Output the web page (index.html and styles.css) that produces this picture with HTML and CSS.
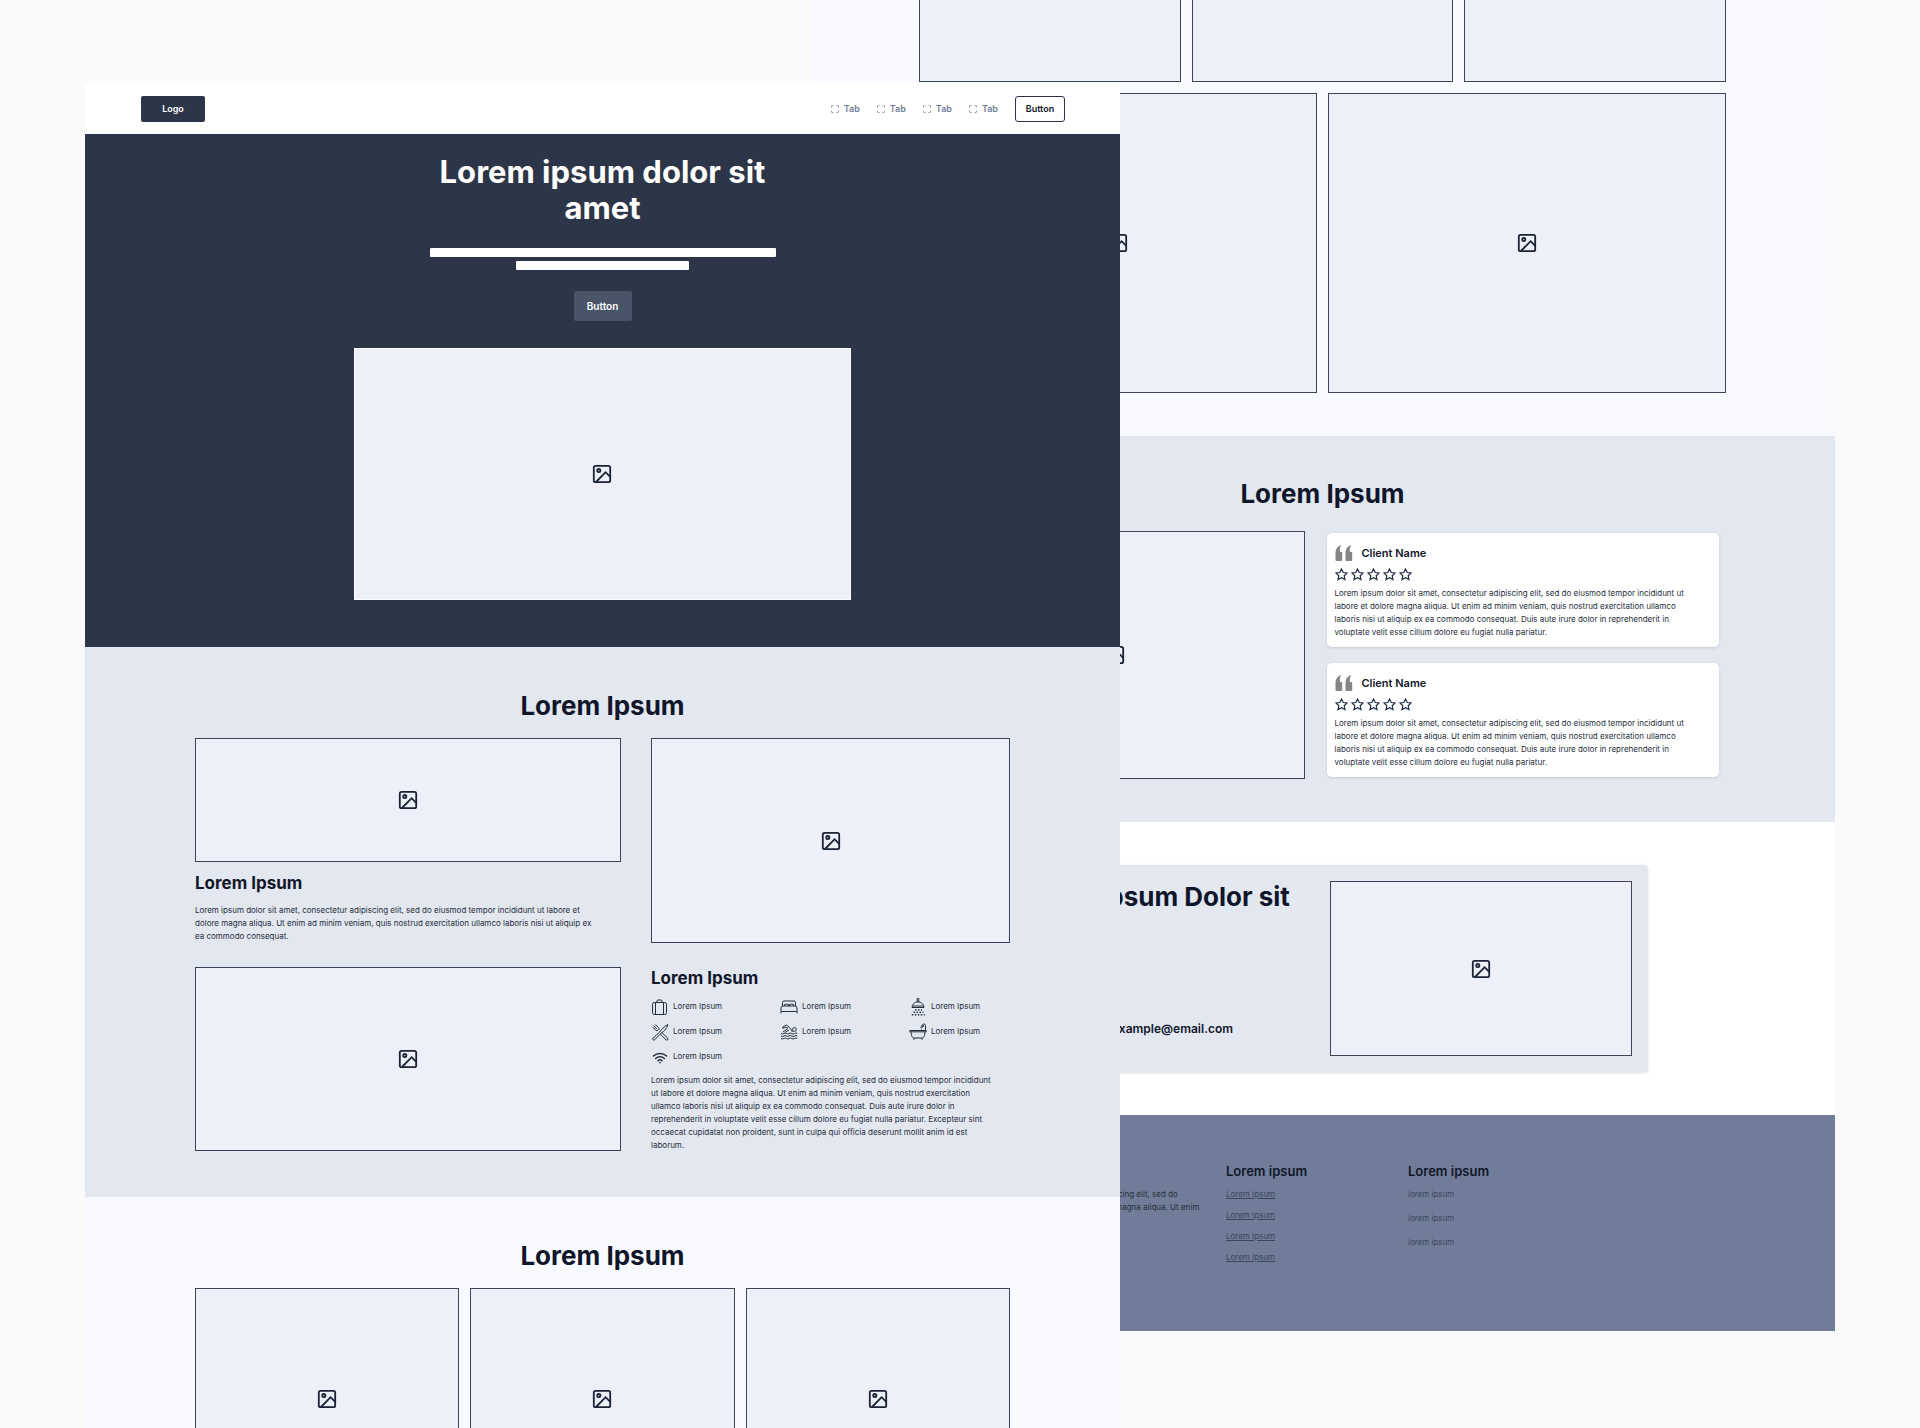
FILE: index.html
```html
<!DOCTYPE html>
<html lang="en">
<head>
<meta charset="utf-8">
<meta name="viewport" content="width=device-width, initial-scale=1">
<title>Landing page wireframes</title>
<link rel="stylesheet" href="styles.css">
</head>
<body>
<svg class="sprite" aria-hidden="true">
  <symbol id="image" viewBox="0 0 20 20"><rect x="1.8" y="1.8" width="16.4" height="16.4" rx="1.8"/><circle cx="6.8" cy="6.6" r="1.6"/><path d="M4 18 13.6 8.2 18.2 12.8"/></symbol>
  <symbol id="scan" viewBox="0 0 9 9"><path d="M.5 2.8V1.5a1 1 0 0 1 1-1h1.3M6.2.5h1.3a1 1 0 0 1 1 1v1.3M8.5 6.2v1.3a1 1 0 0 1-1 1H6.2M2.8 8.5H1.5a1 1 0 0 1-1-1V6.2"/></symbol>
  <symbol id="star" viewBox="0 0 13 13"><path d="M6.500 1 8.200 4.500l3.800.5-2.800 2.700.7 3.900-3.400-1.900-3.400 1.900.7-3.900L1 5l3.800-.5z"/></symbol>
  <symbol id="quote" viewBox="0 0 18 16"><path d="M6.500 0C5 1.500 4.700 3.500 4.900 7H6.200a1 1 0 0 1 1 1v7a1 1 0 0 1-1 1H1.500a1 1 0 0 1-1-1V8C.5 4 2.500 1 6.500 0zM16.500 0C15 1.500 14.700 3.500 14.900 7h1.300a1 1 0 0 1 1 1v7a1 1 0 0 1-1 1h-4.700a1 1 0 0 1-1-1V8c0-4 2-7 6-8z"/></symbol>
  <symbol id="suitcase" viewBox="0 0 18 18"><rect x="1.500" y="4.500" width="14" height="12" rx="1.800"/><path d="M4.500 4.500v12M12.500 4.500v12M6 4.500V3a1 1 0 0 1 1-1h3a1 1 0 0 1 1 1v1.500"/></symbol>
  <symbol id="bed" viewBox="0 0 18 18"><path d="M2.500 8V4.500a1.500 1.500 0 0 1 1.500-1.500h10a1.500 1.500 0 0 1 1.500 1.500V8M1 15.500V10a2 2 0 0 1 2-2h12a2 2 0 0 1 2 2v5.500M1 13.500h16M4.500 8V6.500q2-.8 4 0V8M9.500 8V6.500q2-.8 4 0V8"/></symbol>
  <symbol id="shower" viewBox="0 0 18 18"><path d="M8.200.5h1.600v3.200H8.200zM3 9.500a6 5.600 0 0 1 12 0zM3 8h12"/><path stroke-width="1.400" stroke-dasharray="1.500 1.500" d="M6 11.700h7M4.500 14.200h10M2.800 16.700h13"/></symbol>
  <symbol id="cutlery" viewBox="0 0 18 18"><path d="M16.800 1.500C13 3.500 10.500 6.500 8.500 9.200L2 15.200a1.100 1.100 0 0 0 1.600 1.600l6.200-6.300C13 8.500 16 5.500 16.800 1.500zM1.500 4l3 3a3 3 0 0 0 2.500.5M4.300 1.500l3 3a3 3 0 0 1 .7 2.500M2.800 2.800l3 3M10.800 9.500l5.800 5.700a1.100 1.100 0 0 1-1.600 1.600l-5.800-5.700"/></symbol>
  <symbol id="swim" viewBox="0 0 18 18"><circle cx="14.500" cy="6.500" r="1.900"/><path d="M3 9 8 5.500 6 4 3 5.500 2.500 4 6.500 2l4 3.500 2 3.500M5 9.500l4-2.500"/><path d="M1 10.500q1.300 1 2.700 0t2.700 0 2.700 0 2.700 0 2.700 0 2.700 0M1 13q1.300 1 2.700 0t2.700 0 2.700 0 2.700 0 2.700 0 2.700 0M1 15.500q1.300 1 2.700 0t2.700 0 2.700 0 2.700 0 2.700 0 2.700 0"/></symbol>
  <symbol id="bath" viewBox="0 0 18 18"><path d="M.8 7.500h16.400v1.300H.8zM2 8.800c.3 3.500 1 6.200 3 6.200h8c2 0 2.700-2.700 3-6.200M5 15v1.800M13 15v1.800M16.500 7.500V2.500a1.700 1.700 0 0 0-3.200-.6M11.800 4.500a2 2 0 0 1 3.200-1.500zM12 6h1"/></symbol>
  <symbol id="wifi" viewBox="0 0 18 18"><path stroke-width="1.500" stroke-linecap="round" d="M2.500 8a9.500 9.500 0 0 1 13 0M4.700 10.500a6.300 6.300 0 0 1 8.600 0M6.900 12.700a3.200 3.200 0 0 1 4.200 0"/><circle cx="9" cy="14.700" r=".5"/></symbol>
</svg>

<div class="canvas">
  <article class="board board-back">
    <section class="section tone-light continued">
      <div class="tiles three">
        <div class="tile gallery"></div>
        <div class="tile gallery"></div>
        <div class="tile gallery"></div>
      </div>
      <div class="tiles two">
        <div class="tile large"><svg class="pic"><use href="#image"/></svg></div>
        <div class="tile large"><svg class="pic"><use href="#image"/></svg></div>
      </div>
    </section>
    <section class="section tone-mid">
      <h2>Lorem Ipsum</h2>
      <div class="reviews">
        <div class="tile"><svg class="pic"><use href="#image"/></svg></div>
        <div class="review-list">
          <article class="review">
            <header><svg class="quote"><use href="#quote"/></svg><h4>Client Name</h4></header>
            <div class="stars" role="img" aria-label="Rating"><svg><use href="#star"/></svg><svg><use href="#star"/></svg><svg><use href="#star"/></svg><svg><use href="#star"/></svg><svg><use href="#star"/></svg></div>
            <p>Lorem ipsum dolor sit amet, consectetur adipiscing elit, sed do eiusmod tempor incididunt ut<br>labore et dolore magna aliqua. Ut enim ad minim veniam, quis nostrud exercitation ullamco<br>laboris nisi ut aliquip ex ea commodo consequat. Duis aute irure dolor in reprehenderit in<br>voluptate velit esse cillum dolore eu fugiat nulla pariatur.</p>
          </article>
          <article class="review">
            <header><svg class="quote"><use href="#quote"/></svg><h4>Client Name</h4></header>
            <div class="stars" role="img" aria-label="Rating"><svg><use href="#star"/></svg><svg><use href="#star"/></svg><svg><use href="#star"/></svg><svg><use href="#star"/></svg><svg><use href="#star"/></svg></div>
            <p>Lorem ipsum dolor sit amet, consectetur adipiscing elit, sed do eiusmod tempor incididunt ut<br>labore et dolore magna aliqua. Ut enim ad minim veniam, quis nostrud exercitation ullamco<br>laboris nisi ut aliquip ex ea commodo consequat. Duis aute irure dolor in reprehenderit in<br>voluptate velit esse cillum dolore eu fugiat nulla pariatur.</p>
          </article>
        </div>
      </div>
    </section>
    <section class="contact">
      <div class="contact-card">
        <div class="contact-text">
          <h2>Lorem Ipsum Dolor sit</h2>
          <a class="email" href="mailto:example@email.com">example@email.com</a>
        </div>
        <div class="tile"><svg class="pic"><use href="#image"/></svg></div>
      </div>
    </section>
    <footer class="footer">
      <div>
        <h4>Lorem ipsum</h4>
        <p>Lorem ipsum dolor sit amet, consectetur adipiscing elit, sed do<br>eiusmod tempor incididunt ut labore et dolore magna aliqua. Ut enim</p>
      </div>
      <nav>
        <h4>Lorem ipsum</h4>
        <ul class="links">
          <li><a href="#">Lorem Ipsum</a></li>
          <li><a href="#">Lorem Ipsum</a></li>
          <li><a href="#">Lorem Ipsum</a></li>
          <li><a href="#">Lorem Ipsum</a></li>
        </ul>
      </nav>
      <div>
        <h4>Lorem ipsum</h4>
        <ul class="notes">
          <li>lorem ipsum</li>
          <li>lorem ipsum</li>
          <li>lorem ipsum</li>
        </ul>
      </div>
    </footer>
  </article>

  <article class="board board-front">
    <header class="topbar">
      <a class="logo" href="#">Logo</a>
      <nav class="tabs">
        <a href="#"><svg><use href="#scan"/></svg>Tab</a>
        <a href="#"><svg><use href="#scan"/></svg>Tab</a>
        <a href="#"><svg><use href="#scan"/></svg>Tab</a>
        <a href="#"><svg><use href="#scan"/></svg>Tab</a>
        <button class="btn-outline" type="button">Button</button>
      </nav>
    </header>
    <section class="hero">
      <h1>Lorem ipsum dolor sit<br>amet</h1>
      <div class="bars"><span class="bar"></span><span class="bar short"></span></div>
      <button class="btn-solid" type="button">Button</button>
      <div class="tile hero-tile"><svg class="pic"><use href="#image"/></svg></div>
    </section>
    <section class="section tone-mid">
      <h2>Lorem Ipsum</h2>
      <div class="features">
        <div class="column">
          <div class="tile wide"><svg class="pic"><use href="#image"/></svg></div>
          <h3 class="under-tile">Lorem Ipsum</h3>
          <p class="summary">Lorem ipsum dolor sit amet, consectetur adipiscing elit, sed do eiusmod tempor incididunt ut labore et<br>dolore magna aliqua. Ut enim ad minim veniam, quis nostrud exercitation ullamco laboris nisi ut aliquip ex<br>ea commodo consequat.</p>
          <div class="tile medium"><svg class="pic"><use href="#image"/></svg></div>
        </div>
        <div class="column">
          <div class="tile tall"><svg class="pic"><use href="#image"/></svg></div>
          <h3>Lorem Ipsum</h3>
          <ul class="amenities">
            <li><svg><use href="#suitcase"/></svg>Lorem Ipsum</li>
            <li><svg><use href="#bed"/></svg>Lorem Ipsum</li>
            <li><svg><use href="#shower"/></svg>Lorem Ipsum</li>
            <li><svg><use href="#cutlery"/></svg>Lorem Ipsum</li>
            <li><svg><use href="#swim"/></svg>Lorem Ipsum</li>
            <li><svg><use href="#bath"/></svg>Lorem Ipsum</li>
            <li><svg><use href="#wifi"/></svg>Lorem Ipsum</li>
          </ul>
          <p>Lorem ipsum dolor sit amet, consectetur adipiscing elit, sed do eiusmod tempor incididunt<br>ut labore et dolore magna aliqua. Ut enim ad minim veniam, quis nostrud exercitation<br>ullamco laboris nisi ut aliquip ex ea commodo consequat. Duis aute irure dolor in<br>reprehenderit in voluptate velit esse cillum dolore eu fugiat nulla pariatur. Excepteur sint<br>occaecat cupidatat non proident, sunt in culpa qui officia deserunt mollit anim id est<br>laborum.</p>
        </div>
      </div>
    </section>
    <section class="section tone-light">
      <h2>Lorem Ipsum</h2>
      <div class="tiles three">
        <div class="tile gallery"><svg class="pic"><use href="#image"/></svg></div>
        <div class="tile gallery"><svg class="pic"><use href="#image"/></svg></div>
        <div class="tile gallery"><svg class="pic"><use href="#image"/></svg></div>
      </div>
    </section>
  </article>
</div>
</body>
</html>
```
FILE: styles.css
```css
:root {
  --navy: #2d3648;
  --ink: #10162a;
  --body: #262d3b;
  --mid: #e2e7f0;
  --light: #f8faff;
  --tile: #edf0f8;
  --slate: #717d98;
}

* { box-sizing: border-box; margin: 0; padding: 0; }

body {
  font-family: Inter, "Liberation Sans", sans-serif;
  font-size: 8px;
  line-height: 13px;
  color: var(--body);
  background: #fafafa;
}

ul { list-style: none; }
a { color: inherit; }
button { font: inherit; cursor: pointer; }
svg { fill: none; stroke: currentColor; flex: none; }
.sprite { display: none; }

/* Two page boards that overlap on one canvas */
.canvas {
  display: grid;
  grid-template-columns: 85fr 726fr 309fr 715fr 85fr;
  align-items: start;
  height: 100vh;
  overflow: hidden;
}
.board { grid-row: 1; min-width: 0; }
.board-back { grid-column: 3 / 5; margin-top: -139px; }
.board-front { grid-column: 2 / 4; margin-top: 83px; z-index: 1; }

h1, h2, h3 { color: var(--ink); font-weight: 700; }
h1 { font-size: 31px; line-height: 36px; color: #fff; }
h2 { font-size: 26px; line-height: 32px; text-align: center; }
h3 { font-size: 17px; line-height: 22px; }
h4 { font-size: 11px; line-height: 16px; font-weight: 600; color: var(--ink); }
p { white-space: nowrap; }

.tile {
  display: flex;
  align-items: center;
  justify-content: center;
  background: var(--tile);
  border: 1px solid #3b445a;
  color: #1a2236;
}
.pic { width: 20px; height: 20px; stroke-width: 1.8; }

/* Top bar */
.topbar {
  display: flex;
  align-items: center;
  justify-content: space-between;
  height: 51px;
  padding: 0 55px 0 56px;
  background: #fff;
  font-size: 9px;
  font-weight: 600;
}
.logo {
  width: 64px;
  border-radius: 2px;
  background: var(--navy);
  color: #fff;
  line-height: 26px;
  text-align: center;
  text-decoration: none;
}
.tabs { display: flex; align-items: center; gap: 17px; }
.tabs a {
  display: flex;
  align-items: center;
  gap: 5px;
  color: var(--slate);
  text-decoration: none;
}
.tabs svg { width: 8px; height: 8px; }
.btn-outline {
  width: 50px;
  height: 26px;
  border: 1px solid var(--navy);
  border-radius: 3px;
  background: #fff;
  color: var(--ink);
}

/* Hero */
.hero {
  display: flex;
  flex-direction: column;
  align-items: center;
  padding: 20px 0 47px;
  background: var(--navy);
  text-align: center;
}
.bars {
  display: flex;
  flex-direction: column;
  align-items: center;
  gap: 4px;
  width: 346px;
  margin: 22px 0 21px;
}
.bar { width: 100%; height: 9px; border-radius: 1px; background: #fff; }
.bar.short { width: 50%; }
.btn-solid {
  width: 58px;
  height: 30px;
  border: 0;
  border-radius: 2px;
  background: #4a5468;
  color: #fff;
  font-size: 10px;
  font-weight: 600;
}
.hero-tile { width: 48%; height: 252px; margin-top: 27px; border-color: #fff; }

/* Shared sections */
.section { padding: 43px 110px 45px; }
.board-back .section { padding: 42px 109px 43px 108px; }
.board-back .continued { padding-top: 0; }
.section h2 { margin-bottom: 16px; }
.tone-mid { background: var(--mid); }
.tone-light { background: var(--light); }

.tiles { display: grid; gap: 11px; }
.three { grid-template-columns: repeat(3, 1fr); }
.two { grid-template-columns: repeat(2, 1fr); margin-top: 11px; }
.gallery { height: 221px; }
.large { height: 300px; }

.features {
  display: grid;
  grid-template-columns: minmax(0, 426fr) minmax(0, 359fr);
  gap: 30px;
}
.wide { height: 124px; }
.medium { height: 184px; }
.tall { height: 205px; margin-bottom: 24px; }
.under-tile { margin: 10px 0; }
.summary { margin-bottom: 24px; }

.amenities {
  display: grid;
  grid-template-columns: 129fr 129fr 101fr;
  grid-auto-rows: 25px;
  margin: 5px 0;
}
.amenities li { display: flex; align-items: center; gap: 4px; }
.amenities svg { width: 18px; height: 18px; stroke-width: 1; }

/* Reviews */
.reviews {
  display: grid;
  grid-template-columns: minmax(0, 380fr) minmax(0, 400fr);
  gap: 22px;
  height: 248px;
  margin-top: 21px;
  padding-left: 6px;
}
.review-list {
  display: flex;
  flex-direction: column;
  justify-content: center;
  gap: 16px;
  padding-right: 7px;
}
.review {
  padding: 12px 8px 8px;
  border-radius: 5px;
  background: #fff;
  box-shadow: 0 1px 3px rgba(45, 54, 72, 0.15);
}
.review header { display: flex; align-items: center; gap: 9px; }
.quote { width: 18px; height: 16px; fill: #858585; stroke: none; }
.stars { display: flex; gap: 3px; margin: 7px 0 6px; color: #1f2a44; }
.stars svg { width: 13px; height: 13px; stroke-width: 1.2; }

/* Contact */
.contact { padding: 43px 187px; background: #fff; }
.contact-card {
  display: grid;
  grid-template-columns: 316fr 302fr;
  height: 207px;
  padding: 16px;
  border-radius: 4px;
  background: var(--mid);
  box-shadow: 0 1px 3px rgba(45, 54, 72, 0.15);
}
.contact-text {
  display: flex;
  flex-direction: column;
  justify-content: space-between;
  align-items: flex-start;
}
.email {
  margin: 0 0 19px 98px;
  color: var(--ink);
  font-size: 12px;
  font-weight: 600;
  line-height: 16px;
  text-decoration: none;
}

/* Footer */
.footer {
  display: grid;
  grid-template-columns: 285fr 182fr 319fr;
  padding: 48px 108px 67px 130px;
  background: var(--slate);
}
.footer h4 { margin-bottom: 9px; font-size: 13px; }
.footer li { color: #3b455c; }
.links { display: grid; gap: 8px; }
.notes { display: grid; gap: 11px; }
```
